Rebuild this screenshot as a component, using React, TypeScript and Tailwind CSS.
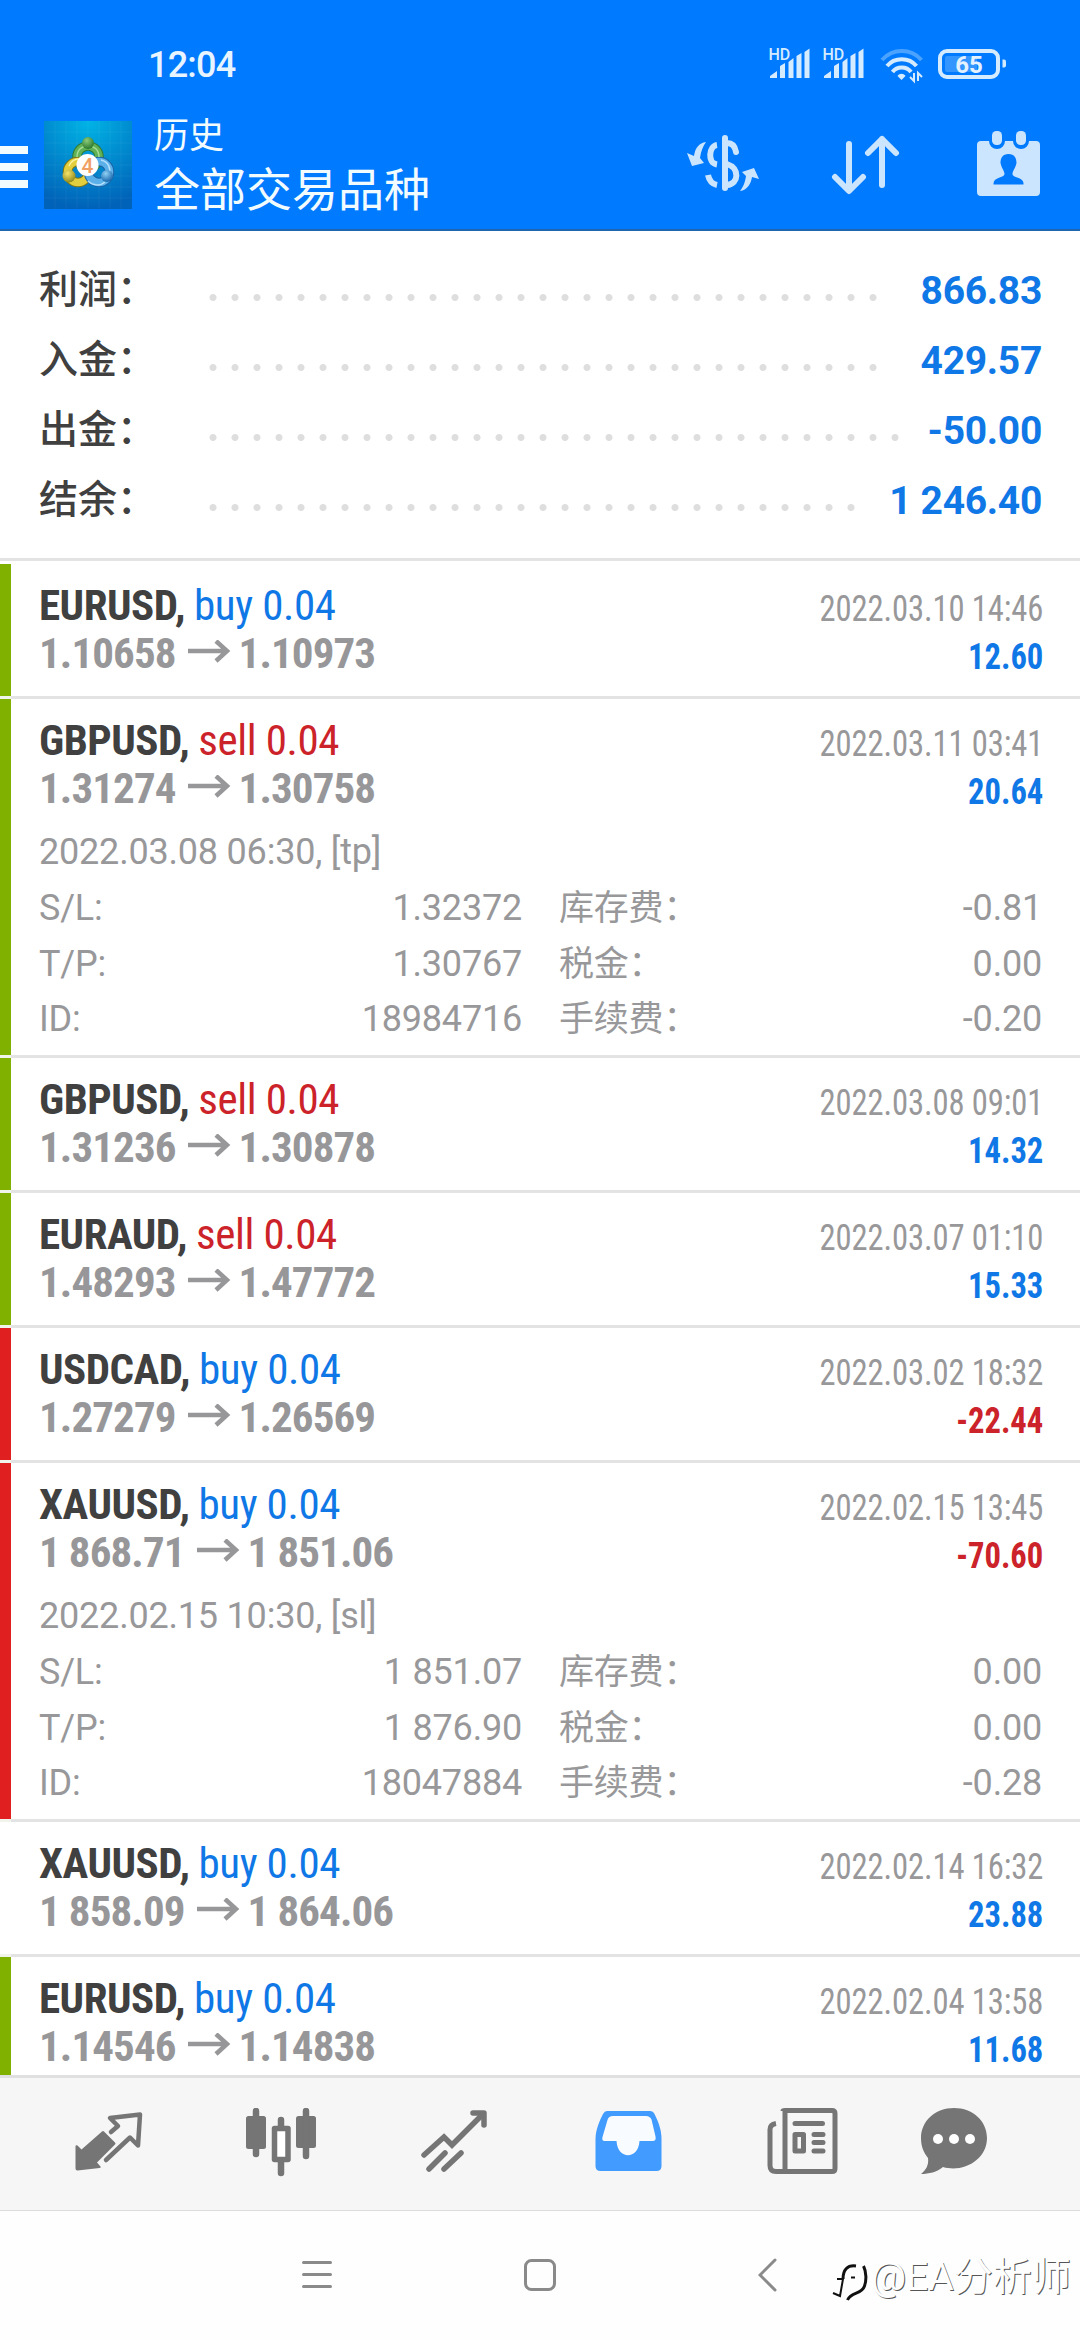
import React, { ReactNode } from 'react';

interface Deal {
  symbol: string;
  side: 'buy' | 'sell';
  open: string;
  close: string;
  time: string;
  profit: string;
  mark: 'green' | 'red' | 'none';
  comment?: string;
  details?: [string, string, string, string][];
}

const summary = [
  { label: '利润：', value: '866.83', dots: 'w-[682px]' },
  { label: '入金：', value: '429.57', dots: 'w-[682px]' },
  { label: '出金：', value: '-50.00', dots: 'w-[704px]' },
  { label: '结余：', value: '1 246.40', dots: 'w-[660px]' },
];

const deals: Deal[] = [
  { symbol: 'EURUSD', side: 'buy', open: '1.10658', close: '1.10973', time: '2022.03.10 14:46', profit: '12.60', mark: 'green' },
  {
    symbol: 'GBPUSD', side: 'sell', open: '1.31274', close: '1.30758', time: '2022.03.11 03:41', profit: '20.64', mark: 'green',
    comment: '2022.03.08 06:30, [tp]',
    details: [
      ['S/L:', '1.32372', '库存费：', '-0.81'],
      ['T/P:', '1.30767', '税金：', '0.00'],
      ['ID:', '18984716', '手续费：', '-0.20'],
    ],
  },
  { symbol: 'GBPUSD', side: 'sell', open: '1.31236', close: '1.30878', time: '2022.03.08 09:01', profit: '14.32', mark: 'green' },
  { symbol: 'EURAUD', side: 'sell', open: '1.48293', close: '1.47772', time: '2022.03.07 01:10', profit: '15.33', mark: 'green' },
  { symbol: 'USDCAD', side: 'buy', open: '1.27279', close: '1.26569', time: '2022.03.02 18:32', profit: '-22.44', mark: 'red' },
  {
    symbol: 'XAUUSD', side: 'buy', open: '1 868.71', close: '1 851.06', time: '2022.02.15 13:45', profit: '-70.60', mark: 'red',
    comment: '2022.02.15 10:30, [sl]',
    details: [
      ['S/L:', '1 851.07', '库存费：', '0.00'],
      ['T/P:', '1 876.90', '税金：', '0.00'],
      ['ID:', '18047884', '手续费：', '-0.28'],
    ],
  },
  { symbol: 'XAUUSD', side: 'buy', open: '1 858.09', close: '1 864.06', time: '2022.02.14 16:32', profit: '23.88', mark: 'none' },
  { symbol: 'EURUSD', side: 'buy', open: '1.14546', close: '1.14838', time: '2022.02.04 13:58', profit: '11.68', mark: 'green' },
];

const markColors = {
  green: 'bg-[#80b000]',
  red: 'bg-[#e02020]',
  none: 'bg-transparent',
};

const condensed = "font-['Roboto_Condensed','Roboto','Noto_Sans_CJK_SC',sans-serif] font-stretch-condensed";

function SignalIcon() {
  return (
    <svg width="42" height="32" viewBox="0 0 42 32" className="shrink-0 overflow-visible">
      <text x="0.500" y="11.5" fontSize="16" fontWeight="500" fontFamily="Roboto, sans-serif" fill="#d5ebff">HD</text>
      <path d="M2 30v-2l7-5v7zM12 18l5-3v15h-5zM20.500 14l5-4v20h-5zM28.500 8l5-3v25h-5zM36.500 4l5-3.500v29.500h-5z" fill="#d5ebff" />
    </svg>
  );
}

function WifiIcon() {
  return (
    <svg width="44" height="36" viewBox="0 0 44 36" className="shrink-0">
      <g fill="none" strokeWidth="4">
        <path d="M2 12c10.500-12 29-12 39.500 0" stroke="#4ba3ff" />
        <path d="M7 18c7.500-9 22-9 29.500 0" stroke="#d5ebff" />
        <path d="M12.500 24c4.500-6 14-6 18.500 0" stroke="#d5ebff" />
      </g>
      <path d="M17.500 28c2-3 6-3 8 0l-4 4z" fill="#d5ebff" />
      <path d="M34 25v8l-4-4M38 33v-8l4 4" fill="none" stroke="#d5ebff" strokeWidth="2" />
    </svg>
  );
}

function BatteryIcon() {
  return (
    <svg width="70" height="32" viewBox="0 0 70 32" className="shrink-0 overflow-visible">
      <rect x="2" y="3" width="58" height="26" rx="7" fill="none" stroke="#d5ebff" strokeWidth="4" />
      <rect x="7" y="8" width="32" height="16" rx="2" fill="#3395ff" />
      <path d="M64.500 11.500h1.500a2 2 0 0 1 2 2v4a2 2 0 0 1-2 2h-1.500z" fill="#d5ebff" />
      <text x="31" y="24.500" textAnchor="middle" fontSize="24" fontWeight="700" fontFamily="Roboto, sans-serif" fill="#e4f2ff">65</text>
    </svg>
  );
}

function AppLogo() {
  return (
    <svg width="88" height="88" viewBox="0 0 88 88" className="shrink-0">
      <defs>
        <radialGradient id="sky" cx="0.5" cy="0" r="1">
          <stop offset="0" stopColor="#00b4e6" />
          <stop offset="1" stopColor="#0062b8" />
        </radialGradient>
        <radialGradient id="leaf" cx="0.4" cy="0.3" r="0.7">
          <stop offset="0" stopColor="#8ccb7c" />
          <stop offset="1" stopColor="#2c7a2e" />
        </radialGradient>
        <radialGradient id="sun" cx="0.4" cy="0.3" r="0.7">
          <stop offset="0" stopColor="#f7e36a" />
          <stop offset="1" stopColor="#8f8a1e" />
        </radialGradient>
        <radialGradient id="sea" cx="0.4" cy="0.3" r="0.7">
          <stop offset="0" stopColor="#8fd0f5" />
          <stop offset="1" stopColor="#1a68ad" />
        </radialGradient>
      </defs>
      <rect width="88" height="88" fill="url(#sky)" />
      <path d="M11 0v88M22 0v88M33 0v88M44 0v88M55 0v88M66 0v88M77 0v88M0 11h88M0 22h88M0 33h88M0 44h88M0 55h88M0 66h88M0 77h88" stroke="#fff" strokeOpacity="0.05" />
      <g fill="none">
        <circle cx="44" cy="36" r="11" stroke="#2f7a34" strokeWidth="9.500" />
        <circle cx="44" cy="36" r="11" stroke="#62b255" strokeWidth="7.500" />
        <circle cx="34" cy="51" r="10.500" stroke="#7d7618" strokeWidth="9.500" />
        <circle cx="34" cy="51" r="10.500" stroke="#e3cf3e" strokeWidth="7.500" />
        <circle cx="55" cy="51" r="10.500" stroke="#1b62a5" strokeWidth="9.500" />
        <circle cx="55" cy="51" r="10.500" stroke="#5cb0ea" strokeWidth="7.500" />
        <path d="M33 36c0-15 22-15 22 0" stroke="#a6dc98" strokeWidth="1.500" />
        <path d="M25 45c3-7 9-8 13-6" stroke="#fbf3a0" strokeWidth="1.500" />
        <path d="M57 39c8 2 10 9 8 14M44 60c5 5 13 5 17 1" stroke="#b5e0fb" strokeWidth="1.500" />
      </g>
      <circle cx="44" cy="22" r="6" fill="url(#leaf)" />
      <circle cx="25" cy="55" r="6.500" fill="url(#sun)" />
      <circle cx="63" cy="55" r="6" fill="url(#sea)" />
      <circle cx="43.500" cy="44" r="11" fill="#fff" />
      <text x="43.500" y="51.500" textAnchor="middle" fontSize="21" fontWeight="500" fontFamily="Roboto, sans-serif" fill="#f0a064">4</text>
    </svg>
  );
}

function CurrencyIcon() {
  return (
    <svg width="74" height="58" viewBox="0 0 74 58">
      <g fill="none" stroke="#cce5ff">
        <path d="M39 3v50" strokeWidth="6" strokeLinecap="round" />
        <path d="M31 10c-8 1-10 18 0 19.500M22 40c1 5 4 9 9 10" strokeWidth="6" />
        <path d="M41 8c5 0 8 3 9 9" strokeWidth="6" strokeLinecap="round" />
        <path d="M41 29c13 4 12 20 0 21" strokeWidth="6" />
      </g>
      <path d="M20 7c-7 1-11 6-12 14l-7-3 5 13 12-3-4-5c1-7 3-12 6-16zM54 56c7-1 11-7 12-14l7 2-5-11-12 4 4 4c-1 7-3 11-6 15z" fill="#cce5ff" />
    </svg>
  );
}

function SortIcon() {
  return (
    <svg width="70" height="60" viewBox="0 0 70 60" fill="none" stroke="#cce5ff" strokeWidth="6" strokeLinecap="round" strokeLinejoin="round">
      <path d="M18 9v46M4 42l14 14 14-14M51 50V4M37 18L51 4l14 14" />
    </svg>
  );
}

function CalendarIcon() {
  return (
    <svg width="64" height="68" viewBox="0 0 64 68">
      <path d="M4 10h8a8 8 0 0 0 16 0h8a8 8 0 0 0 16 0h7a4 4 0 0 1 4 4v47a4 4 0 0 1-4 4H4a4 4 0 0 1-4-4V14a4 4 0 0 1 4-4z" fill="#cce5ff" />
      <rect x="15" y="0" width="10" height="14" rx="4.500" fill="#cce5ff" />
      <rect x="39" y="0" width="10" height="14" rx="4.500" fill="#cce5ff" />
      <path d="M31.500 23c-6 0-8 4-8 9 1 5 4 8 4 11 0 4-11 3-11 9.500v1h30v-1c0-6.500-11-5.500-11-9.500 0-3 3-6 4-11 0-5-2-9-8-9z" fill="#007aff" />
    </svg>
  );
}

function NavIcon({ className, children, viewBox }: { className: string; children: ReactNode; viewBox: string }) {
  return (
    <svg height="70" viewBox={viewBox} className={`mt-[30px] shrink-0 ${className}`}>
      {children}
    </svg>
  );
}

function DealRow({ deal }: { deal: Deal }) {
  return (
    <div className="flex shrink-0">
      <div className={`w-[11px] shrink-0 border-b-[3px] border-[#f1f4ea] ${markColors[deal.mark]}`} />
      <div className="flex-1 pl-[28px] pr-[38px] border-b-[3px] border-[#e3e3e3]">
        <div className={`flex justify-between h-[132px] pt-[17px] ${condensed}`}>
          <div className="text-[43px] leading-[48px] whitespace-pre">
            <div>
              <span className="font-bold tracking-[-0.5px] text-[#404040]">{deal.symbol},</span>
              <span className={`ml-[9px] tracking-[-0.4px] ${deal.side === 'buy' ? 'text-[#0f78e6]' : 'text-[#cc2229]'}`}>{deal.side} 0.04</span>
            </div>
            <div className="flex items-center font-bold tracking-[-0.9px] text-[#97979a]">
              {deal.open}
              <svg width="43" height="26" viewBox="0 0 43 26" className="ml-[12px] mr-[8px]" fill="none" stroke="#97979a" strokeWidth="4.500">
                <path d="M0 11h40M28 1l11 10-11 10" />
              </svg>
              {deal.close}
            </div>
          </div>
          <div className="-mr-px text-right text-[36px] leading-[48px] pt-[4px] origin-right scale-x-[0.905]">
            <div className="tracking-[-0.1px] text-[#98989a]">{deal.time}</div>
            <div className={`font-bold ${deal.profit.startsWith('-') ? 'text-[#cc2229]' : 'text-[#0f78e6]'}`}>{deal.profit}</div>
          </div>
        </div>
        {deal.details && (
          <div className="h-[224px] text-[36px] tracking-[-0.2px] text-[#98989a]">
            <div className="leading-[42px]">{deal.comment}</div>
            <div className="pt-[8px]">
              {deal.details.map(([k1, v1, k2, v2]) => (
                <div key={k1} className="flex h-[55.500px] leading-[55px]">
                  <div className="flex justify-between w-[483px]">
                    <span>{k1}</span>
                    <span>{v1}</span>
                  </div>
                  <div className="flex flex-1 justify-between pl-[37px]">
                    <span className="text-[35px]">{k2}</span>
                    <span>{v2}</span>
                  </div>
                </div>
              ))}
            </div>
          </div>
        )}
      </div>
    </div>
  );
}

export default function App() {
  return (
    <div className="flex flex-col w-[1080px] h-[2340px] overflow-hidden bg-white font-['Roboto','Noto_Sans_CJK_SC',sans-serif]">
      <header className="h-[231px] shrink-0 bg-[#007aff] border-b-2 border-[#1f66ae]">
        <div className="flex items-start justify-between h-[117px] pt-[48px] pl-[148px] pr-[72px]">
          <div className="text-[36px] leading-[35px] font-medium tracking-[-0.8px] text-[#e8f4ff]">12:04</div>
          <div className="flex items-start">
            <SignalIcon />
            <div className="w-[12px]" />
            <SignalIcon />
            <div className="w-[16px]" />
            <WifiIcon />
            <div className="w-[14px]" />
            <BatteryIcon />
          </div>
        </div>
        <div className="flex items-start">
          <div className="flex flex-col gap-[9px] w-[28px] pt-[29px]">
            <div className="h-[8px] bg-[#f2fcff]" />
            <div className="h-[8px] bg-[#f2fcff]" />
            <div className="h-[8px] bg-[#f2fcff]" />
          </div>
          <div className="pl-4 pt-1">
            <AppLogo />
          </div>
          <div className="flex-1 pt-[2px] pl-[22px] text-[#f2fcff]">
            <div className="text-[35px] leading-[36px]">历史</div>
            <div className="text-[46px] leading-[52px] pt-[9px]">全部交易品种</div>
          </div>
          <div className="flex items-start pt-[14px] pr-[39px]">
            <div className="pt-1"><CurrencyIcon /></div>
            <div className="pt-1 pl-[71px]"><SortIcon /></div>
            <div className="pl-[76px]"><CalendarIcon /></div>
          </div>
        </div>
      </header>

      <section className="h-[330px] shrink-0 pt-[23px] border-b-[3px] border-[#e3e3e3]">
        {summary.map(row => (
          <div key={row.label} className="flex items-center h-[70px] pl-[39px] pr-[38px]">
            <div className="w-[163px] pt-[2px] text-[39px] leading-[68px] font-medium text-[#404040] whitespace-nowrap">{row.label}</div>
            <div className={`h-[7px] mt-[17px] bg-[radial-gradient(circle,#dedede_3px,transparent_4px)] bg-[length:22px_7px] ${row.dots}`} />
            <div className="flex-1 pt-[4px] text-right text-[39px] leading-[60px] font-bold tracking-[-0.3px] text-[#0f78e6] whitespace-nowrap">{row.value}</div>
          </div>
        ))}
      </section>

      <main className="flex flex-col h-[1514px] shrink-0 pt-[3px] overflow-hidden">
        {deals.map(deal => (
          <DealRow key={deal.time} deal={deal} />
        ))}
      </main>

      <nav className="flex items-start h-[136px] shrink-0 bg-[#f6f6f6] border-t-[3px] border-b border-t-[#e0e0e0] border-b-[#dcdcdc]">
        <NavIcon viewBox="75 2108 70 70" className="w-[70px] ml-[75px] fill-[#757575]">
          <path d="M102 2131.500q1-1 2 0l11 11q1 1 0 2l-18 18 3.500 4q1 1-1 1.500l-22 2.500q-2 0-2-2v-22q0-2 2-1l4 4z" />
          <path d="M111 2132l7-6-8-8 30-3.500-2 31-8-8-24 22.500" fill="none" stroke="#757575" strokeWidth="4.500" strokeLinejoin="round" strokeLinecap="round" />
        </NavIcon>
        <NavIcon viewBox="246 2108 72 70" className="w-[72px] ml-[101px] fill-[#757575]">
          <rect x="246" y="2116" width="20" height="33" rx="2.500" />
          <rect x="296" y="2116" width="20" height="32" rx="2.500" />
          <path d="M256 2111v43M306 2111v45M281 2120v8M281 2160v13" stroke="#757575" strokeWidth="6.500" strokeLinecap="round" />
          <rect x="274.500" y="2128.500" width="13.500" height="31" fill="#fff" stroke="#757575" strokeWidth="5.500" strokeLinejoin="round" />
        </NavIcon>
        <NavIcon viewBox="420 2108 70 70" className="w-[70px] ml-[102px] fill-none stroke-[#757575]">
          <g strokeWidth="5.500" strokeLinecap="round">
            <path d="M424 2155l20-18 8 8 31-31" />
            <path d="M473 2113h11v12" strokeLinejoin="round" />
            <path d="M429 2169l16-16M444 2169l17-16" />
          </g>
        </NavIcon>
        <NavIcon viewBox="594 2108 68 70" className="w-[68px] ml-[105px]">
          <path d="M606 2111h43q3 0 4.500 3c4 8 7 16 7 25v27q0 5-5 5h-56q-5 0-5-5v-27c0-9 4-18 7.500-25q1.500-3 4-3z" fill="#429bff" />
          <path d="M612 2116h33q4 0 5.500 3.500l4 17q1 4.500-3 4.500h-13c-1 19-22 19-23 0h-12q-3 0-2-4l5-17q1-4 5.500-4z" fill="#f8fbff" />
        </NavIcon>
        <NavIcon viewBox="766 2108 72 70" className="w-[72px] ml-[104px] fill-none stroke-[#757575]">
          <g strokeWidth="5">
            <path d="M782 2111q0-.500 2-.500h47q3 0 3 3v55q0 3-3 3h-56q-6 0-6-6v-36q0-5 6-6M784 2111v60" />
            <path d="M794 2123.500h27.500M813 2134.500h9M813 2142.500h9M813 2151h9" strokeLinecap="round" />
            <rect x="794" y="2134.500" width="8.500" height="16.500" strokeLinejoin="round" />
          </g>
        </NavIcon>
        <NavIcon viewBox="919 2108 68 70" className="w-[68px] ml-[81px]">
          <path d="M953 2108c19 0 33 13 33 30 0 22-24 35-44 29-6 5-14 7-22 7 5-4 8-9 7-16-4-5-7-11-7-20 0-17 14-30 33-30z" fill="#757575" />
          <circle cx="937" cy="2139" r="5" fill="#fff" />
          <circle cx="953" cy="2139" r="5" fill="#fff" />
          <circle cx="969" cy="2139" r="5" fill="#fff" />
        </NavIcon>
      </nav>

      <footer className="flex items-start flex-1 pt-[47px] bg-[#fefefe]">
        <svg width="30" height="34" viewBox="0 0 30 34" className="ml-[302px] shrink-0" fill="none" stroke="#8a8a8a" strokeWidth="3" strokeLinecap="round">
          <path d="M1.500 4.500h27M1.500 16.500h27M1.500 28.500h27" />
        </svg>
        <svg width="32" height="34" viewBox="0 0 32 34" className="ml-[192px] shrink-0" fill="none" stroke="#8a8a8a" strokeWidth="3">
          <rect x="1.500" y="2.500" width="29" height="29" rx="6" />
        </svg>
        <svg width="20" height="34" viewBox="0 0 20 34" className="ml-[202px] shrink-0" fill="none" stroke="#8a8a8a" strokeWidth="3" strokeLinecap="round">
          <path d="M17 2L2 17l15 15" />
        </svg>
        <svg width="38" height="42" viewBox="832 2264 38 42" className="mt-[4px] ml-[54px] shrink-0" fill="none" stroke="#111">
          <path d="M843 2281c0-9 4-14 13-13M863.500 2268c3 6 3 15 1 20-3 9-13 5-17 14" strokeWidth="3" />
          <path d="M837 2281h6l-3 17-7-3M851 2279.500h4" strokeWidth="2" />
        </svg>
        <div className="text-[39px] leading-[44px] -mt-[3px] ml-[1px] text-white whitespace-nowrap text-shadow-[1px_1px_0px_#555]">@EA分析师</div>
      </footer>
    </div>
  );
}
